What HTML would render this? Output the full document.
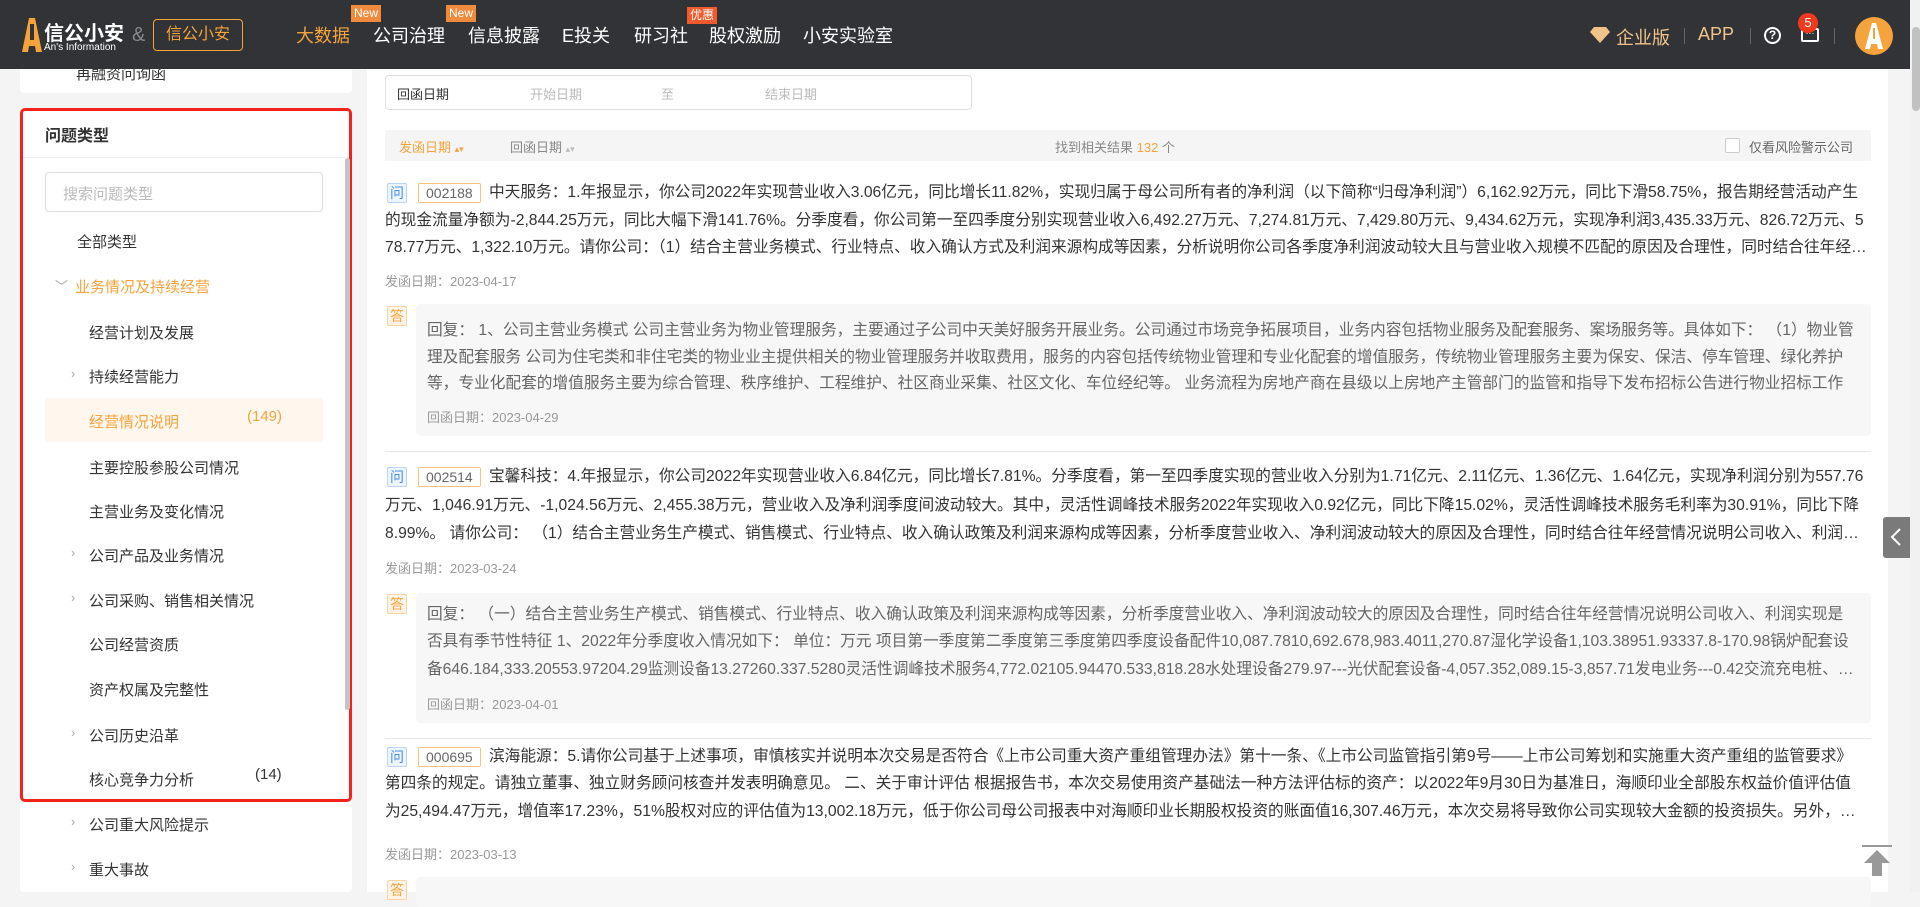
<!DOCTYPE html>
<html><head><meta charset="utf-8">
<style>
*{margin:0;padding:0;box-sizing:border-box}
body{width:1920px;height:892px;overflow:hidden;background:#f4f4f4;font-family:"Liberation Sans","Noto Sans CJK SC",sans-serif;color:#333;position:relative}
.a{position:absolute}
.hdr{left:0;top:0;width:1910px;height:69px;background:#323337}
.nav{top:22px;font-size:18px;color:#fff;white-space:nowrap}
.badge{font-size:12px;color:#fff;background:#f08a3c;padding:0 3px;line-height:17px;height:17px}
.side{background:#fff;border-radius:4px}
.it{font-size:15px;color:#333;white-space:nowrap}
.arr{font-size:13px;color:#aaa}
.main{left:367px;top:69px;width:1521px;height:823px;background:#fff}
.ln{font-size:15.7px;white-space:nowrap;overflow:hidden;text-overflow:ellipsis;color:#333;line-height:22px}
.gr{font-size:13px;color:#999}
.tq{width:20px;height:20px;border:1px solid #b9d5fb;background:#edf5ff;color:#4a8fe6;font-size:14px;text-align:center;line-height:18px;border-radius:2px}
.ta{width:20px;height:20px;border:1px solid #fbd3a3;background:#fff4e8;color:#f5a33c;font-size:14px;text-align:center;line-height:18px;border-radius:2px}
.code{height:20px;border:1px solid #f6c27f;color:#666;font-size:14px;line-height:18px;padding:0 7px;border-radius:2px}
.ans{background:#f7f7f7;border-radius:4px}
.al{color:#666}
.sep{height:1px;background:#e6e6e6}
</style></head><body>
<div class="a" style="left:0;top:0;width:1920px;height:2px;background:#ccc"></div>
<div class="a hdr"></div>
<svg class="a" style="left:22px;top:18px" width="20" height="34" viewBox="0 0 20 34"><path d="M7 0h6l7 34h-6l-1-6h-6l-1 6H0z" fill="#f5a33c"/><rect x="8" y="6" width="4" height="16" fill="#323337"/></svg>
<div class="a" style="left:44px;top:17px;font-size:20px;color:#fff;font-weight:bold">信公小安</div>
<div class="a" style="left:44px;top:42px;font-size:10px;color:#fff">An's Information</div>
<div class="a" style="left:132px;top:24px;font-size:20px;color:#888">&amp;</div>
<div class="a" style="left:153px;top:19px;width:90px;height:32px;border:1px solid #f5a33c;border-radius:4px;color:#f5a33c;font-size:16px;text-align:center;line-height:30px">信公小安</div>
<div class="a nav" style="left:296px;color:#f5a33c">大数据</div>
<div class="a nav" style="left:373px">公司治理</div>
<div class="a nav" style="left:468px">信息披露</div>
<div class="a nav" style="left:562px">E投关</div>
<div class="a nav" style="left:634px">研习社</div>
<div class="a nav" style="left:709px">股权激励</div>
<div class="a nav" style="left:803px">小安实验室</div>
<div class="a badge" style="left:351px;top:5px">New</div>
<div class="a badge" style="left:446px;top:5px">New</div>
<div class="a badge" style="left:687px;top:7px;background:#f05a2c">优惠</div>
<svg class="a" style="left:1590px;top:27px" width="20" height="16" viewBox="0 0 20 16"><path d="M4 0h12l4 5-10 11L0 5z" fill="#f0c38a"/></svg>
<div class="a" style="left:1616px;top:24px;font-size:18px;color:#f0c38a">企业版</div>
<div class="a" style="left:1684px;top:28px;width:1px;height:16px;background:#666"></div>
<div class="a" style="left:1698px;top:24px;font-size:18px;color:#f0c38a">APP</div>
<div class="a" style="left:1750px;top:28px;width:1px;height:16px;background:#666"></div>
<div class="a" style="left:1764px;top:27px;width:17px;height:17px;border:2px solid #fff;border-radius:50%;color:#fff;font-size:12px;font-weight:bold;text-align:center;line-height:13px">?</div>
<div class="a" style="left:1801px;top:28px;width:18px;height:14px;border:2px solid #fff;border-radius:2px;color:#fff;font-size:9px;text-align:center;line-height:6px">···</div>
<div class="a" style="left:1798px;top:13px;width:20px;height:20px;border-radius:50%;background:#f03a1e;color:#fff;font-size:13px;text-align:center;line-height:20px">5</div>
<div class="a" style="left:1834px;top:28px;width:1px;height:16px;background:#666"></div>
<div class="a" style="left:1855px;top:17px;width:38px;height:38px;border-radius:50%;background:#f5a33c"></div>
<svg class="a" style="left:1865px;top:23px" width="18" height="26" viewBox="0 0 18 26"><path d="M7 0h4l7 26h-5l-1-5H6l-1 5H0z" fill="#fff"/><rect x="8" y="5" width="2" height="11" fill="#f5a33c"/></svg>
<div class="a" style="left:1910px;top:0;width:10px;height:892px;background:#f1f1f1"></div>
<div class="a" style="left:1912px;top:27px;width:8px;height:84px;background:#c1c1c1;border-radius:4px"></div>

<div class="a side" style="left:20px;top:69px;width:332px;height:24px;border-radius:0 0 4px 4px;overflow:hidden"><div class="it" style="position:absolute;left:56px;top:-6px">再融资问询函</div></div>
<div class="a side" style="left:20px;top:108px;width:332px;height:784px"></div>
<div class="a" style="left:20px;top:108px;width:332px;height:694px;border:3px solid #f5221b;border-radius:5px"></div>
<div class="a" style="left:45px;top:122px;font-size:16px;font-weight:bold">问题类型</div>
<div class="a" style="left:23px;top:157px;width:326px;height:1px;background:#eee"></div>
<div class="a" style="left:345px;top:158px;width:5px;height:552px;background:#c4c4c4;border-radius:3px"></div>
<div class="a" style="left:45px;top:172px;width:278px;height:40px;border:1px solid #dcdfe6;border-radius:4px;font-size:15px;color:#bbb;padding:10px 17px">搜索问题类型</div>
<div class="a" style="left:45px;top:398px;width:278px;height:44px;background:#fff7ed"></div>
<div class="a it" style="left:77px;top:231px">全部类型</div>
<div class="a arr" style="left:55px;top:276px">﹀</div>
<div class="a it" style="left:75px;top:276px;color:#f5a33c">业务情况及持续经营</div>
<div class="a it" style="left:89px;top:322px">经营计划及发展</div>
<div class="a arr" style="left:71px;top:366px">›</div>
<div class="a it" style="left:89px;top:366px">持续经营能力</div>
<div class="a it" style="left:89px;top:411px;color:#f5a33c">经营情况说明</div>
<div class="a it" style="left:247px;top:408px;color:#f5a33c">(149)</div>
<div class="a it" style="left:89px;top:457px">主要控股参股公司情况</div>
<div class="a it" style="left:89px;top:501px">主营业务及变化情况</div>
<div class="a arr" style="left:71px;top:545px">›</div>
<div class="a it" style="left:89px;top:545px">公司产品及业务情况</div>
<div class="a arr" style="left:71px;top:590px">›</div>
<div class="a it" style="left:89px;top:590px">公司采购、销售相关情况</div>
<div class="a it" style="left:89px;top:634px">公司经营资质</div>
<div class="a it" style="left:89px;top:679px">资产权属及完整性</div>
<div class="a arr" style="left:71px;top:725px">›</div>
<div class="a it" style="left:89px;top:725px">公司历史沿革</div>
<div class="a it" style="left:89px;top:769px">核心竞争力分析</div>
<div class="a it" style="left:255px;top:766px">(14)</div>
<div class="a arr" style="left:71px;top:814px">›</div>
<div class="a it" style="left:89px;top:814px">公司重大风险提示</div>
<div class="a arr" style="left:71px;top:859px">›</div>
<div class="a it" style="left:89px;top:859px">重大事故</div>

<div class="a main"></div>
<div class="a" style="left:385px;top:75px;width:587px;height:35px;border:1px solid #dcdfe6;border-radius:4px"></div>
<div class="a" style="left:397px;top:84px;font-size:13px;color:#333">回函日期</div>
<div class="a" style="left:530px;top:84px;font-size:13px;color:#bbb">开始日期</div>
<div class="a" style="left:661px;top:84px;font-size:13px;color:#bbb">至</div>
<div class="a" style="left:765px;top:84px;font-size:13px;color:#bbb">结束日期</div>
<div class="a" style="left:385px;top:130px;width:1486px;height:31px;background:#f5f5f5"></div>
<div class="a" style="left:399px;top:137px;font-size:13px;color:#f5a33c">发函日期 <span style="font-size:9px">▴▾</span></div>
<div class="a" style="left:510px;top:137px;font-size:13px;color:#888">回函日期 <span style="font-size:9px;color:#bbb">▴▾</span></div>
<div class="a" style="left:1055px;top:137px;font-size:13px;color:#888">找到相关结果 <span style="color:#f5a33c">132</span> 个</div>
<div class="a" style="left:1725px;top:138px;width:15px;height:15px;border:1px solid #ccc;border-radius:2px;background:#fff"></div>
<div class="a" style="left:1749px;top:137px;font-size:13px;color:#666">仅看风险警示公司</div>

<div class="a tq" style="left:387px;top:183px">问</div>
<div class="a code" style="left:418px;top:183px">002188</div>
<div class="a ln" style="left:489px;top:182px;width:1382px">中天服务：1.年报显示，你公司2022年实现营业收入3.06亿元，同比增长11.82%，实现归属于母公司所有者的净利润（以下简称“归母净利润”）6,162.92万元，同比下滑58.75%，报告期经营活动产生</div>
<div class="a ln" style="left:385px;top:210px;width:1486px">的现金流量净额为-2,844.25万元，同比大幅下滑141.76%。分季度看，你公司第一至四季度分别实现营业收入6,492.27万元、7,274.81万元、7,429.80万元、9,434.62万元，实现净利润3,435.33万元、826.72万元、5</div>
<div class="a ln" style="left:385px;top:237px;width:1486px">78.77万元、1,322.10万元。请你公司：（1）结合主营业务模式、行业特点、收入确认方式及利润来源构成等因素，分析说明你公司各季度净利润波动较大且与营业收入规模不匹配的原因及合理性，同时结合往年经营情况说明公司收入、利润实现是否具有季节性特征</div>
<div class="a gr" style="left:385px;top:271px">发函日期：2023-04-17</div>
<div class="a ta" style="left:387px;top:306px">答</div>
<div class="a ans" style="left:416px;top:304px;width:1455px;height:132px"></div>
<div class="a ln al" style="left:427px;top:320px;width:1430px">回复： 1、公司主营业务模式 公司主营业务为物业管理服务，主要通过子公司中天美好服务开展业务。公司通过市场竞争拓展项目，业务内容包括物业服务及配套服务、案场服务等。具体如下： （1）物业管</div>
<div class="a ln al" style="left:427px;top:347px;width:1430px">理及配套服务 公司为住宅类和非住宅类的物业业主提供相关的物业管理服务并收取费用，服务的内容包括传统物业管理和专业化配套的增值服务，传统物业管理服务主要为保安、保洁、停车管理、绿化养护</div>
<div class="a ln al" style="left:427px;top:373px;width:1430px">等，专业化配套的增值服务主要为综合管理、秩序维护、工程维护、社区商业采集、社区文化、车位经纪等。 业务流程为房地产商在县级以上房地产主管部门的监管和指导下发布招标公告进行物业招标工作</div>
<div class="a gr" style="left:427px;top:407px">回函日期：2023-04-29</div>
<div class="a sep" style="left:385px;top:451px;width:1486px"></div>

<div class="a tq" style="left:387px;top:467px">问</div>
<div class="a code" style="left:418px;top:467px">002514</div>
<div class="a ln" style="left:489px;top:466px;width:1382px">宝馨科技：4.年报显示，你公司2022年实现营业收入6.84亿元，同比增长7.81%。分季度看，第一至四季度实现的营业收入分别为1.71亿元、2.11亿元、1.36亿元、1.64亿元，实现净利润分别为557.76</div>
<div class="a ln" style="left:385px;top:495px;width:1486px">万元、1,046.91万元、-1,024.56万元、2,455.38万元，营业收入及净利润季度间波动较大。其中，灵活性调峰技术服务2022年实现收入0.92亿元，同比下降15.02%，灵活性调峰技术服务毛利率为30.91%，同比下降</div>
<div class="a ln" style="left:385px;top:523px;width:1486px">8.99%。 请你公司： （1）结合主营业务生产模式、销售模式、行业特点、收入确认政策及利润来源构成等因素，分析季度营业收入、净利润波动较大的原因及合理性，同时结合往年经营情况说明公司收入、利润实现是否具有季节性</div>
<div class="a gr" style="left:385px;top:558px">发函日期：2023-03-24</div>
<div class="a ta" style="left:387px;top:594px">答</div>
<div class="a ans" style="left:416px;top:593px;width:1455px;height:130px"></div>
<div class="a ln al" style="left:427px;top:604px;width:1430px">回复： （一）结合主营业务生产模式、销售模式、行业特点、收入确认政策及利润来源构成等因素，分析季度营业收入、净利润波动较大的原因及合理性，同时结合往年经营情况说明公司收入、利润实现是</div>
<div class="a ln al" style="left:427px;top:631px;width:1430px">否具有季节性特征 1、2022年分季度收入情况如下： 单位：万元 项目第一季度第二季度第三季度第四季度设备配件10,087.7810,692.678,983.4011,270.87湿化学设备1,103.38951.93337.8-170.98锅炉配套设</div>
<div class="a ln al" style="left:427px;top:659px;width:1430px">备646.184,333.20553.97204.29监测设备13.27260.337.5280灵活性调峰技术服务4,772.02105.94470.533,818.28水处理设备279.97---光伏配套设备-4,057.352,089.15-3,857.71发电业务---0.42交流充电桩、直流充电桩</div>
<div class="a gr" style="left:427px;top:694px">回函日期：2023-04-01</div>
<div class="a sep" style="left:385px;top:738px;width:1486px"></div>

<div class="a tq" style="left:387px;top:747px">问</div>
<div class="a code" style="left:418px;top:747px">000695</div>
<div class="a ln" style="left:489px;top:746px;width:1382px">滨海能源：5.请你公司基于上述事项，审慎核实并说明本次交易是否符合《上市公司重大资产重组管理办法》第十一条、《上市公司监管指引第9号——上市公司筹划和实施重大资产重组的监管要求》</div>
<div class="a ln" style="left:385px;top:773px;width:1486px">第四条的规定。请独立董事、独立财务顾问核查并发表明确意见。 二、关于审计评估 根据报告书，本次交易使用资产基础法一种方法评估标的资产：以2022年9月30日为基准日，海顺印业全部股东权益价值评估值</div>
<div class="a ln" style="left:385px;top:801px;width:1486px">为25,494.47万元，增值率17.23%，51%股权对应的评估值为13,002.18万元，低于你公司母公司报表中对海顺印业长期股权投资的账面值16,307.46万元，本次交易将导致你公司实现较大金额的投资损失。另外，标的公司</div>
<div class="a gr" style="left:385px;top:844px">发函日期：2023-03-13</div>
<div class="a ta" style="left:387px;top:880px">答</div>
<div class="a ans" style="left:416px;top:877px;width:1455px;height:30px"></div>

<div class="a" style="left:1883px;top:517px;width:27px;height:41px;background:#7a7a7a;border-radius:3px 0 0 3px"></div>
<svg class="a" style="left:1890px;top:527px" width="12" height="20" viewBox="0 0 12 20"><path d="M10 2 2 10l8 8" fill="none" stroke="#fff" stroke-width="2"/></svg>
<svg class="a" style="left:1862px;top:845px" width="30" height="32" viewBox="0 0 30 32"><rect x="0" y="0" width="30" height="2" fill="#999"/><path d="M15 5 2 18h8v13h10V18h8z" fill="#999"/></svg>
</body></html>
